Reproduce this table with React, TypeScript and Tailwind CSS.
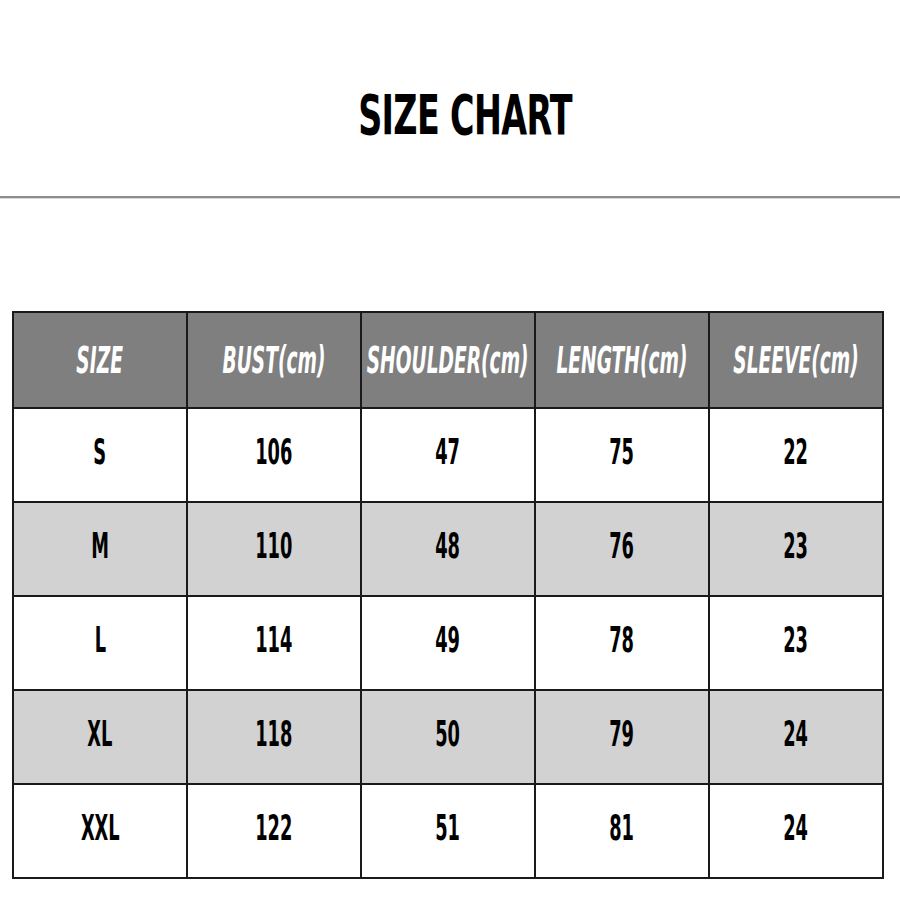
const headers = ['SIZE', 'BUST(cm)', 'SHOULDER(cm)', 'LENGTH(cm)', 'SLEEVE(cm)'];

const rows = [
  ['S', '106', '47', '75', '22'],
  ['M', '110', '48', '76', '23'],
  ['L', '114', '49', '78', '23'],
  ['XL', '118', '50', '79', '24'],
  ['XXL', '122', '51', '81', '24'],
];

const narrow = { fontFamily: '"Liberation Sans Narrow", "DejaVu Sans Condensed", "Liberation Sans", sans-serif' };

const App = () => {
  return (
    <div className="w-[900px] h-[900px] bg-white overflow-hidden">
      <div className="h-[196px] flex items-center justify-center pl-[30px] pt-[35px]">
        <h1
          className="text-[58px] font-bold text-black tracking-[-1px] inline-block scale-x-[0.64] scale-y-[0.95] whitespace-nowrap"
          style={{ fontFamily: '"DejaVu Sans Condensed", "DejaVu Sans", sans-serif' }}
        >
          SIZE CHART
        </h1>
      </div>
      <div className="h-[3px] bg-[#8c8c8c] border-b border-[#d8d8d8]" />
      <div className="pt-[112px] pl-[12px]">
        <table className="w-[872px] table-fixed border-collapse border-2 border-[#1a1a1a]" style={narrow}>
          <thead>
            <tr className="h-[96px] bg-[#7f7f7f]">
              {headers.map((h) => (
                <th key={h} className="border-2 border-[#1a1a1a] p-0 font-bold italic text-white text-[37px] leading-none">
                  <div className="flex justify-center whitespace-nowrap">
                    <span className="shrink-0 inline-block scale-x-[0.56]">{h}</span>
                  </div>
                </th>
              ))}
            </tr>
          </thead>
          <tbody>
            {rows.map((row, i) => (
              <tr key={i} className={i % 2 === 1 ? 'h-[94px] bg-[#d2d2d2]' : 'h-[94px] bg-white'}>
                {row.map((cell, j) => (
                  <td key={j} className="border-2 border-[#1a1a1a] p-0 pb-[6px] text-center font-bold text-black text-[36px] leading-none">
                    <span className="inline-block scale-x-[0.55]">{cell}</span>
                  </td>
                ))}
              </tr>
            ))}
          </tbody>
        </table>
      </div>
    </div>
  );
};

export default App;
